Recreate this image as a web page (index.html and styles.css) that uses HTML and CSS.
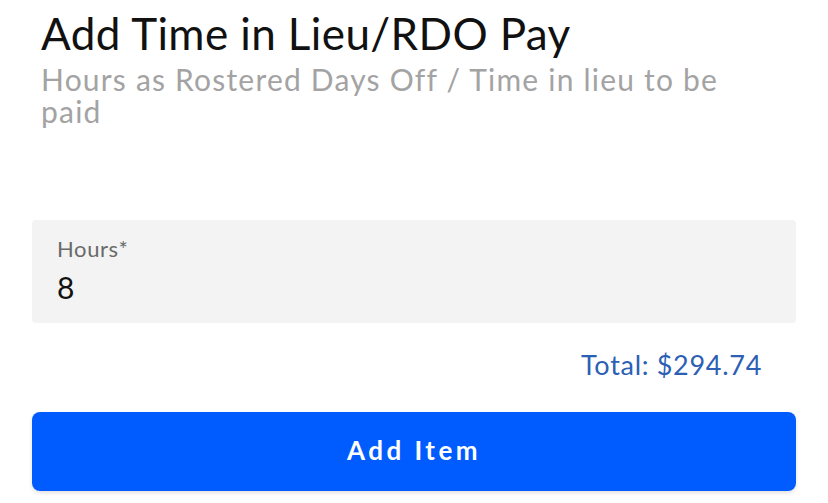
FILE: index.html
```html
<!DOCTYPE html>
<html>
<head>
<meta charset="utf-8">
<link rel="stylesheet" href="styles.css">
</head>
<body>
<div class="page">
  <header class="head">
    <h1 class="title">Add Time in Lieu/RDO Pay</h1>
    <p class="subtitle">Hours as Rostered Days Off / Time in lieu to be paid</p>
  </header>
  <div class="field">
    <label class="field-label">Hours*</label>
    <div class="field-value">8</div>
  </div>
  <div class="total">Total: $294.74</div>
  <button class="add-btn">Add Item</button>
</div>
</body>
</html>
```
FILE: styles.css
```css
html, body {
  margin: 0;
  padding: 0;
  background: #ffffff;
}
body {
  font-family: Lato, "Noto Sans", sans-serif;
  width: 828px;
  height: 503px;
  overflow: hidden;
}
.page {
  padding: 0 32px;
  display: flex;
  flex-direction: column;
}
.head {
  padding: 8px 60px 0 9px;
  height: 220px;
  box-sizing: border-box;
}
.title {
  margin: 0;
  font-weight: 400;
  font-size: 44px;
  line-height: 50px;
  letter-spacing: 0.4px;
  color: #111;
}
.subtitle {
  margin: 5px 0 0 0;
  font-size: 30px;
  line-height: 32px;
  letter-spacing: 1.2px;
  color: #a3a3a3;
  font-weight: 400;
}
.field {
  background: #f3f3f3;
  border-radius: 4px;
  height: 103px;
  padding: 14px 25px 0 25px;
  box-sizing: border-box;
  display: flex;
  flex-direction: column;
}
.field-label {
  font-size: 22px;
  line-height: 30px;
  letter-spacing: 0.6px;
  color: #6a6a6a;
}
.field-value {
  margin-top: 3px;
  font-size: 30px;
  line-height: 40px;
  color: #111;
}
.total {
  align-self: flex-end;
  margin: 22px 34px 0 0;
  font-size: 27px;
  line-height: 40px;
  letter-spacing: 0.7px;
  color: #2d5fb4;
}
.add-btn {
  margin-top: 27px;
  height: 79px;
  width: 764px;
  padding: 0 0 4px 0;
  border: none;
  border-radius: 8px;
  background: #005cff;
  color: #fff;
  font-family: Lato, "Noto Sans", sans-serif;
  font-weight: 700;
  font-size: 26px;
  letter-spacing: 3.5px;
  box-shadow: 0 2px 4px rgba(0,0,0,0.12);
}
```
